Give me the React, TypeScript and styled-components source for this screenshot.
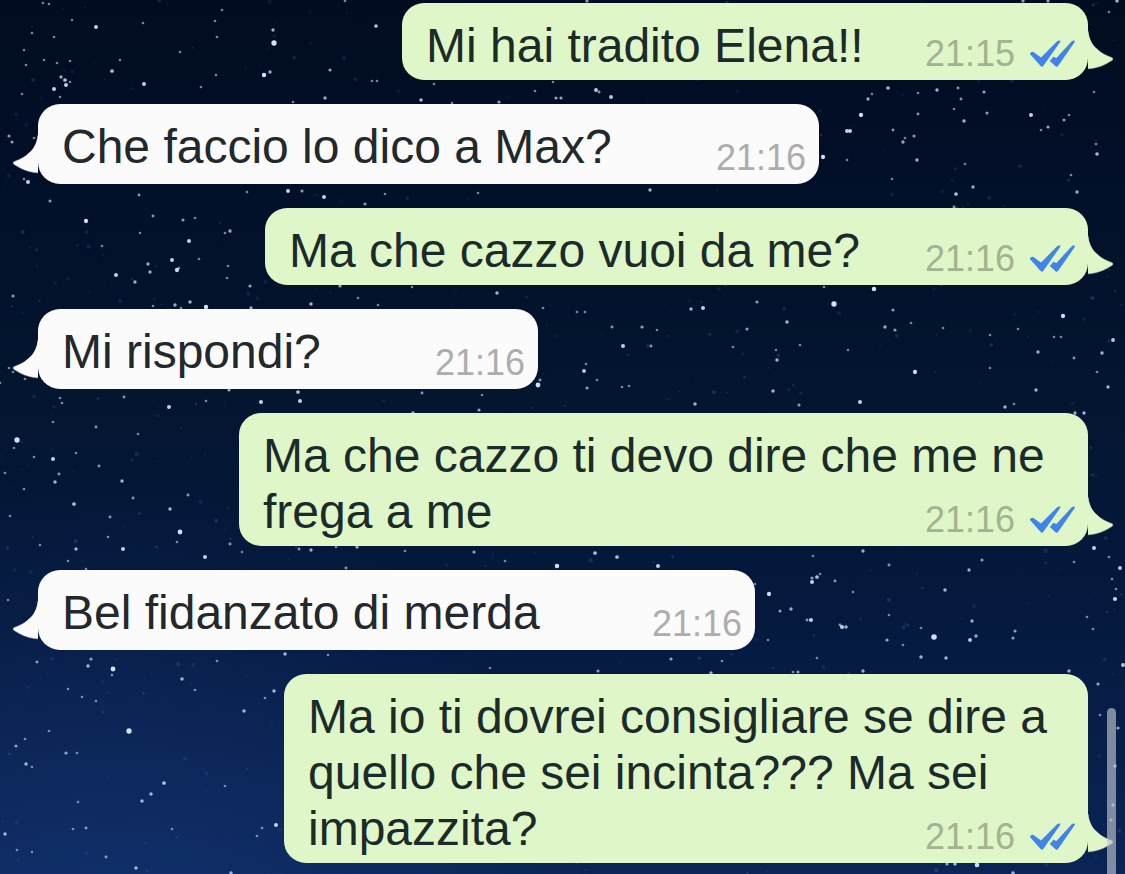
import React from "react";
import styled, { createGlobalStyle } from "styled-components";

const GlobalStyle = createGlobalStyle`
  *, *::before, *::after { box-sizing: border-box; }
  html { overflow: hidden; background: #041231; }
  body {
    margin: 0;
    font-family: "Liberation Sans", Helvetica, Arial, sans-serif;
  }
`;

type Side = "in" | "out";

const palette = {
  in: { bubble: "#fbfbfb", text: "#22282b", time: "#adadad" },
  out: { bubble: "#dff6c8", text: "#1b2b2a", time: "#a2b391" },
};

const Screen = styled.main`
  position: relative;
  min-height: 100vh;
  overflow: hidden;
  background:
    radial-gradient(ellipse at 10% 110%, rgba(28, 66, 140, 0.4), transparent 35%),
    linear-gradient(#010c20 0%, #020f28 20%, #03152f 45%, #05193e 70%, #0a2456 100%);
`;

const Sky = styled.svg`
  position: absolute;
  inset: 0;
  width: 100%;
  height: 100%;
`;

const Thread = styled.ol`
  position: relative;
  display: flex;
  flex-direction: column;
  gap: 24px;
  margin: 0;
  padding: 3px 37px 11px 38px;
  list-style: none;
`;

const Bubble = styled.li<{ $side: Side; $width: number }>`
  position: relative;
  align-self: ${(p) => (p.$side === "out" ? "flex-end" : "flex-start")};
  width: ${(p) => p.$width}px;
  max-width: 100%;
  padding: 15px 13px 6px 24px;
  border-radius: 22px;
  background: ${(p) => palette[p.$side].bubble};
`;

const Body = styled.div<{ $side: Side }>`
  display: flow-root;
  font-size: 48px;
  line-height: 56px;
  color: ${(p) => palette[p.$side].text};
`;

/* Floats to the right end of the last line of the message. */
const Meta = styled.span<{ $side: Side }>`
  float: right;
  display: flex;
  align-items: center;
  gap: 14px;
  margin-top: ${(p) => (p.$side === "out" ? 16 : 19)}px;
  font-size: 36px;
  line-height: 40px;
  color: ${(p) => palette[p.$side].time};
`;

const TailShape = styled.svg<{ $side: Side }>`
  position: absolute;
  bottom: 10px;
  ${(p) => (p.$side === "out" ? "left: 100%;" : "right: 100%; transform: scaleX(-1);")}
  width: 26px;
  height: 42px;
`;

const ScrollThumb = styled.div`
  position: absolute;
  top: 81%;
  right: 9px;
  bottom: -9px;
  width: 9px;
  border-radius: 5px;
  background: rgba(190, 195, 203, 0.66);
`;

function Tail({ side }: { side: Side }) {
  return (
    <TailShape $side={side} viewBox="0 0 26 42" aria-hidden="true">
      <path
        d="M0 3C1 11 4 17 9 21C14 26 20 28 24 29.5Q26 31 24 32.5C18 36 12 40 0 41Z"
        fill={palette[side].bubble}
        stroke="#8d9992"
        strokeOpacity="0.5"
        strokeWidth="1"
      />
      <path
        d="M0 3C1 11 4 17 9 21C14 26 18 28 22 29.8L21 33C16 36 10 39 0 40Z"
        fill={palette[side].bubble}
      />
    </TailShape>
  );
}

function ReadTicks() {
  return (
    <svg width="46" height="28" viewBox="0 0 46 28" fill="#4084e8" role="img" aria-label="Letto">
      <path d="M1.6 14.8Q0.2 13.2 2 12.2Q3.8 11.2 5.2 12.4L12 17.6L28.4 1Q30 0 31.2 0.6Q31.8 1.2 30.8 2.4L14.4 25.8Q13 27.6 11.4 25.8Z" />
      <path d="M20.8 21L24.4 16.7L27.4 18L43 1Q44.8 0 45.8 0.7Q46.2 1.3 45.4 2.5L29.2 25.8Q27.8 27.6 26 25.8Z" />
    </svg>
  );
}

/* Stars as x, y and an optional magnitude from 1 (faint) to 3 (bright). */
const starData = `
43,3 49,4 72,20 96,27,2 32,33 54,37 24,50 26,65 44,60 57,63 70,61 61,77,1.5 65,80,1.8 66,85,2 70,82 54,89,2 60,97 22,94
120,60 112,71,1.8 144,84,2 180,52 222,10 215,21 217,37 216,75 201,87 273,30,1.5 274,43,3 264,75,2.3 270,72,1.5 330,70,1.4
376,26,1.8 345,1 372,81 377,81 325,98,1.5 293,102 143,23 9,136,1.3 12,142,1.3 34,138 24,179 28,182,2 50,201,1.3 86,221,2.2 139,195,1.2
247,192 288,191,2 302,191,1.3 324,197,2 365,204,1.3 385,194 153,216,1.2 183,220,1.3 195,218 140,233 189,241,2 230,231,1.5
225,233 172,260,2 177,270,2.2 179,268 148,264,1.5 150,272,1.5 116,275,2 135,282,1.5 102,246 199,259 228,266 227,278
250,286,1.4 13,296,1.3 340,286,1.4 358,298 153,306 175,305,1.5 181,308 190,302,1.6 206,307,2.3 251,308,1.5 25,379 0,383
9,368 13,372 60,398 62,403 124,397,1.2 169,407,2 206,401 229,390,1.4 261,402,2 298,392,1.8 300,401,2 17,440,3 14,448 53,422
96,427,1.2 138,434 34,457 53,459,2 76,453 99,466,1.2 59,474,1.2 55,482,1.6 24,489 5,473 122,481,1.6 133,498,1.2 188,495,1.2
74,504,1.8 170,509,1.6 10,516 110,517,1.2 108,537 180,532,2.6 177,542 40,545 76,549,1.6 68,561 123,549,2 205,557,2
230,544,1.2 242,552 86,569 8,600 37,662,1.2 91,659,1.3 88,666,1.6 113,669,2.7 112,675 182,679,1.6 195,690 217,661 285,654,1.6
274,691,1.6 265,698 244,711,1.6 68,689 82,697 96,701 129,731,3 49,731 25,739 16,746,1.3 66,753,1.4 77,753 26,764,1.6 32,767
164,783,1.8 151,794,1.6 142,801,1.6 78,802 86,828,1.2 73,829 225,786 276,825,2 262,828 257,836 172,829 5,834,1.6 17,850
32,852 106,857,1.2 136,868,1.6 231,873,1.5 888,88,1.7 868,99,1.5 872,94 861,115,2.2 847,131,2 850,131,2 823,157,2.2 937,90,1.6
918,93 958,88,1.2 961,99,1.2 984,92,1.4 954,109 918,114,1.2 987,113,1.3 964,121,1.6 893,130,1.2 903,142,1.5 905,138 914,136,1.3
917,160,1.6 965,164 892,179 847,160 956,194,1.8 973,187,1.5 954,207,1.2 1031,115,2 1069,115 1064,120,1.3 1048,127,1.4 1041,130
1094,92 1096,144 1097,154,1.7 1071,175 1077,192,1.5 824,287 874,289,2.4 834,304,3 757,302,1.3 787,322,1.6 747,329,1.3
893,310,1.3 885,327,1.5 895,330,1.3 911,323 943,328 1018,329 1063,316,2.2 1113,340,1.9 1102,353,1.6 1074,358,1.2
1038,352,1.5 777,360,1.6 776,350 800,345 848,350 915,372,2.2 860,402,2 773,391,1.6 799,405,1.3 1036,390,1.6 1005,407,1.6
1014,404 1108,387,1.6 1075,413,1.5 1084,413,1.6 990,368 1097,372 990,335 1054,337 1061,337 311,304,1.6 378,305 412,287
497,293,1.6 543,308 577,312 585,312 612,327,1.2 642,327,1.4 657,330 691,309,1.6 703,308,2 623,346,2 651,346,1.2 586,364
584,371,1.9 597,380 587,388,1.3 629,386 622,387 538,385,2.6 540,380,1.2 422,393,1.2 482,395 479,410,1.4 413,413,1.6 695,404,1.6
733,347 863,551,1.5 813,556 889,565,1.2 812,582,2 812,578,1.3 817,577,1.8 820,574 835,581,1.2 853,592 769,594,2.2 755,584
780,611,1.3 791,609,1.5 811,620,2 807,620,1.2 840,625,1.2 842,627,2 846,627,1.6 887,640,1.4 903,645 934,637,3.2 921,628
972,621,1.5 970,640,1.9 976,636,1.5 1015,631,1.3 1013,638,1.3 945,590,1.6 969,570,1.5 982,560,1.3 921,657,1.6 946,658,1.6
1074,562 1094,548,2 1109,557 1120,568,1.9 1115,599,2.1 1116,589 1112,579 1087,617 1093,629 1123,665,1.9 1069,671,1.5
817,658 863,671,1.5 793,672 798,672,1.3 768,640 889,615 311,550,1.5 299,549,1.2 336,547 357,547,1.5 346,568,1.2 405,551 474,552,1.4
557,566,2.4 595,553,1.8 617,557,1.8 658,566,2 505,561 490,668 598,671,1.3 671,659,1.4 722,661 711,673,1.5 328,655
1098,684,1.4 1118,728,1.4 1115,766,1.5 1100,715 1113,805,1.4 1111,820,1.3 977,865,2.5 955,864,1.6 947,864,1.4 1013,873,1.6
421,100,1.7 499,102,1.4 452,103 556,98,1.4 561,98,1.4 596,90,1.9 599,92,1.2 611,97,1.9 553,82 535,91 434,84 587,1,1.4 650,190,1.6
478,193 1023,1,1.4 1048,1,1.4 1117,1,1.6 1109,12
`;

const stars = starData
  .trim()
  .split(/\s+/)
  .map((entry) => {
    const [x, y, m = 1] = entry.split(",").map(Number);
    return { x, y, r: 0.7 + m * 0.65, o: Math.min(1, 0.2 + m * 0.36) };
  });

/* Faint blue dust behind the stars, from a fixed seed so it never changes. */
const dust = (() => {
  let seed = 20;
  const next = () => {
    seed = (seed * 16807) % 2147483647;
    return seed / 2147483647;
  };
  return Array.from({ length: 700 }, () => ({
    x: next() * 1125,
    y: next() * 874,
    r: 0.8 + next() * 1.4,
    o: 0.06 + next() * 0.2,
  }));
})();

function NightSky() {
  return (
    <Sky viewBox="0 0 1125 874" preserveAspectRatio="xMidYMid slice" aria-hidden="true">
      <g fill="#4f7fc4">
        {dust.map((d, i) => (
          <circle key={i} cx={d.x} cy={d.y} r={d.r} opacity={d.o} />
        ))}
      </g>
      <g fill="#cfe2fa">
        {stars.map((s, i) => (
          <circle key={i} cx={s.x} cy={s.y} r={s.r} opacity={s.o} />
        ))}
      </g>
    </Sky>
  );
}

const messages: { side: Side; text: string; time: string; width: number }[] = [
  { side: "out", text: "Mi hai tradito Elena!!", time: "21:15", width: 686 },
  { side: "in", text: "Che faccio lo dico a Max?", time: "21:16", width: 781 },
  { side: "out", text: "Ma che cazzo vuoi da me?", time: "21:16", width: 823 },
  { side: "in", text: "Mi rispondi?", time: "21:16", width: 500 },
  { side: "out", text: "Ma che cazzo ti devo dire che me ne frega a me", time: "21:16", width: 849 },
  { side: "in", text: "Bel fidanzato di merda", time: "21:16", width: 717 },
  {
    side: "out",
    text: "Ma io ti dovrei consigliare se dire a quello che sei incinta??? Ma sei impazzita?",
    time: "21:16",
    width: 804,
  },
];

export default function App() {
  return (
    <>
      <GlobalStyle />
      <Screen>
        <NightSky />
        <Thread>
          {messages.map((m, i) => (
            <Bubble key={i} $side={m.side} $width={m.width}>
              <Body $side={m.side}>
                <span>{m.text}</span>
                <Meta $side={m.side}>
                  <time>{m.time}</time>
                  {m.side === "out" && <ReadTicks />}
                </Meta>
              </Body>
              <Tail side={m.side} />
            </Bubble>
          ))}
        </Thread>
        <ScrollThumb />
      </Screen>
    </>
  );
}
